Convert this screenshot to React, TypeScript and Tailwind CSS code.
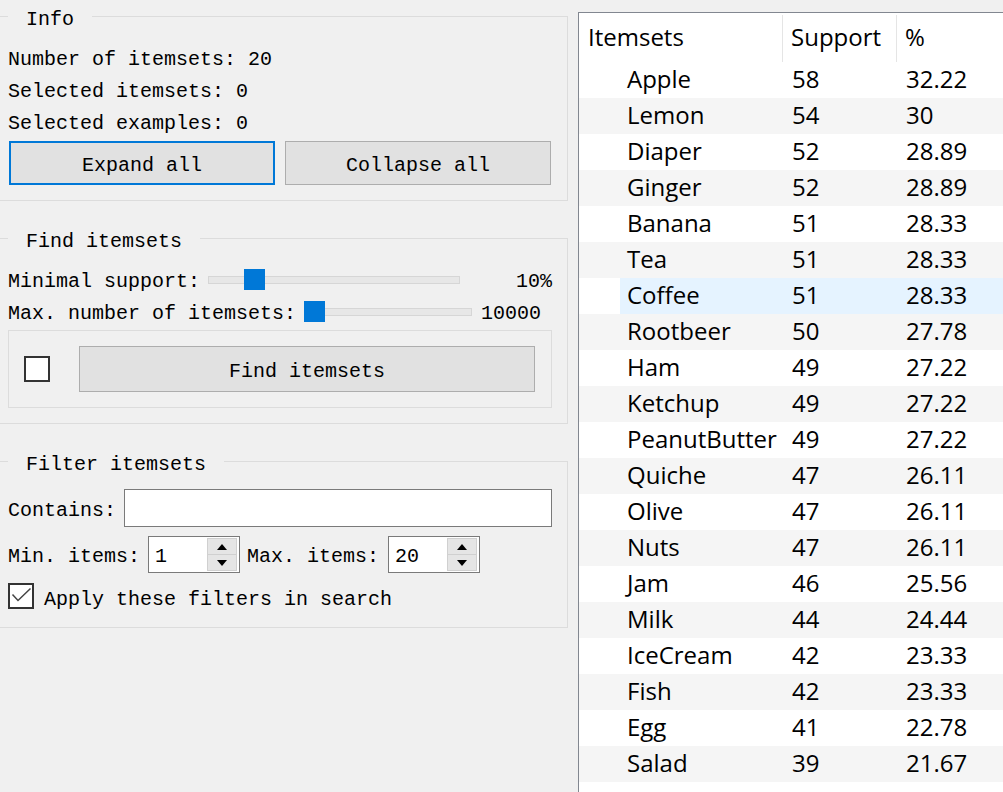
import React from "react"

const rows: [string, number, string][] = [
    ["Apple", 58, "32.22"],
    ["Lemon", 54, "30"],
    ["Diaper", 52, "28.89"],
    ["Ginger", 52, "28.89"],
    ["Banana", 51, "28.33"],
    ["Tea", 51, "28.33"],
    ["Coffee", 51, "28.33"],
    ["Rootbeer", 50, "27.78"],
    ["Ham", 49, "27.22"],
    ["Ketchup", 49, "27.22"],
    ["PeanutButter", 49, "27.22"],
    ["Quiche", 47, "26.11"],
    ["Olive", 47, "26.11"],
    ["Nuts", 47, "26.11"],
    ["Jam", 46, "25.56"],
    ["Milk", 44, "24.44"],
    ["IceCream", 42, "23.33"],
    ["Fish", 42, "23.33"],
    ["Egg", 41, "22.78"],
    ["Salad", 39, "21.67"],
]

const GroupBox = ({ title, className, children }: { title: string; className?: string; children: React.ReactNode }) => (
    <fieldset className={`-ml-px w-[569px] border border-[#dcdcdc] p-0 ${className ?? ""}`}>
        <legend className="ml-[8px] px-[18px] pt-[8px] leading-[24px]">{title}</legend>
        {children}
    </fieldset>
)

const Slider = ({ width, offset }: { width: string; offset: string }) => (
    <div className={`relative h-[8px] border border-[#d6d6d6] bg-[#e7e7e7] ${width}`}>
        <div className={`absolute top-[-8px] h-[21px] w-[21px] bg-[#0078d7] ${offset}`} />
    </div>
)

const SpinBox = ({ value }: { value: string }) => (
    <div className="flex h-[37px] w-[92px] items-center border border-[#7a7a7a] bg-white">
        <span className="flex-1 pt-[5px] pl-[6px]">{value}</span>
        <div className="mr-[2px] flex h-[33px] w-[30px] flex-col border border-[#d0d0d0] bg-[#e5e5e5]">
            <div className="flex flex-1 items-center justify-center border-b border-[#d0d0d0]">
                <svg width="10" height="6" viewBox="0 0 10 6"><path d="M5 0 L10 6 L0 6 Z" fill="#000" /></svg>
            </div>
            <div className="flex flex-1 items-center justify-center">
                <svg width="10" height="6" viewBox="0 0 10 6"><path d="M0 0 L10 0 L5 6 Z" fill="#000" /></svg>
            </div>
        </div>
    </div>
)

const App = () => {
    return (
        <div className="flex h-[792px] w-[1003px] overflow-hidden bg-[#f0f0f0] text-black">
            <div className="w-[568px] font-['Liberation_Mono',monospace] text-[20px]">
                <GroupBox title="Info">
                    <div className="px-[8px] pt-[12px] pb-[15px]">
                        <div className="leading-[32px]">Number of itemsets: 20</div>
                        <div className="leading-[32px]">Selected itemsets: 0</div>
                        <div className="leading-[32px]">Selected examples: 0</div>
                        <div className="mt-[1px] grid w-[543px] grid-cols-2 gap-[10px] pl-px">
                            <button className="h-[44px] border-2 border-[#0078d7] bg-[#e1e1e1] pt-[5px]">Expand all</button>
                            <button className="h-[44px] border border-[#adadad] bg-[#e1e1e1] pt-[5px]">Collapse all</button>
                        </div>
                    </div>
                </GroupBox>

                <GroupBox title="Find itemsets" className="mt-[21px]">
                    <div className="px-[8px] pt-[10px] pb-[15px]">
                        <div className="flex h-[32px] items-center">
                            <span className="pt-[4px]">Minimal support:</span>
                            <div className="ml-[8px]"><Slider width="w-[252px]" offset="left-[35px]" /></div>
                            <span className="flex-1 pt-[4px] pr-[7px] text-right">10%</span>
                        </div>
                        <div className="flex h-[32px] items-center">
                            <span className="pt-[4px]">Max. number of itemsets:</span>
                            <div className="ml-[8px]"><Slider width="w-[168px]" offset="left-[-1px]" /></div>
                            <span className="ml-[9px] pt-[4px]">10000</span>
                        </div>
                        <div className="mt-[2px] flex h-[78px] w-[544px] items-center border border-[#dcdcdc] pr-[16px] pl-[15px]">
                            <div className="h-[26px] w-[26px] border-2 border-[#333] bg-white" />
                            <button className="ml-[29px] h-[46px] flex-1 border border-[#adadad] bg-[#e1e1e1] pt-[6px]">Find itemsets</button>
                        </div>
                    </div>
                </GroupBox>

                <GroupBox title="Filter itemsets" className="mt-[21px]">
                    <div className="px-[8px] pt-[12px] pb-[18px]">
                        <div className="flex h-[38px] items-center">
                            <span className="pt-[6px]">Contains:</span>
                            <div className="ml-[8px] h-[38px] w-[428px] border border-[#7a7a7a] bg-white" />
                        </div>
                        <div className="mt-[9px] flex h-[37px] items-center">
                            <span className="pt-[5px]">Min. items:</span>
                            <div className="ml-[8px]"><SpinBox value="1" /></div>
                            <span className="ml-[7px] pt-[5px]">Max. items:</span>
                            <div className="ml-[9px]"><SpinBox value="20" /></div>
                        </div>
                        <div className="mt-[10px] flex h-[26px] items-center">
                            <div className="h-[26px] w-[26px] border-2 border-[#333] bg-white">
                                <svg width="22" height="22" viewBox="0 0 22 22">
                                    <polyline points="2.5,9.5 8,15.5 20.5,3.5" fill="none" stroke="#444" strokeWidth="1.5" />
                                </svg>
                            </div>
                            <span className="ml-[10px] pt-[7px]">Apply these filters in search</span>
                        </div>
                    </div>
                </GroupBox>
            </div>

            <div className="mt-[12px] ml-[10px] h-[780px] flex-1 overflow-hidden border-t border-l border-[#828790] bg-white font-['Open_Sans',sans-serif] text-[24px]">
                <div className="flex h-[49px] items-center">
                    <div className="mt-[2px] flex h-[47px] w-[204px] items-center border-r border-[#e5e5e5] pb-[3px] pl-[9px]">Itemsets</div>
                    <div className="mt-[2px] flex h-[47px] w-[114px] items-center border-r border-[#e5e5e5] pb-[3px] pl-[8px]">Support</div>
                    <div className="flex-1 pb-[1px] pl-[8px]">%</div>
                </div>
                {rows.map(([name, support, pct], i) => (
                    <div key={name} className={`flex h-[36px] items-center ${i % 2 === 1 ? "bg-[#f5f5f5]" : "bg-white"}`}>
                        <div className="w-[41px] self-stretch" />
                        <div className={`flex flex-1 items-center self-stretch pb-[2px] ${name === "Coffee" ? "bg-[#e5f3ff]" : ""}`}>
                            <div className="w-[163px] pl-[7px]">{name}</div>
                            <div className="w-[114px] pl-[9px]">{support}</div>
                            <div className="flex-1 pl-[9px]">{pct}</div>
                        </div>
                    </div>
                ))}
            </div>
        </div>
    )
}

export default App
